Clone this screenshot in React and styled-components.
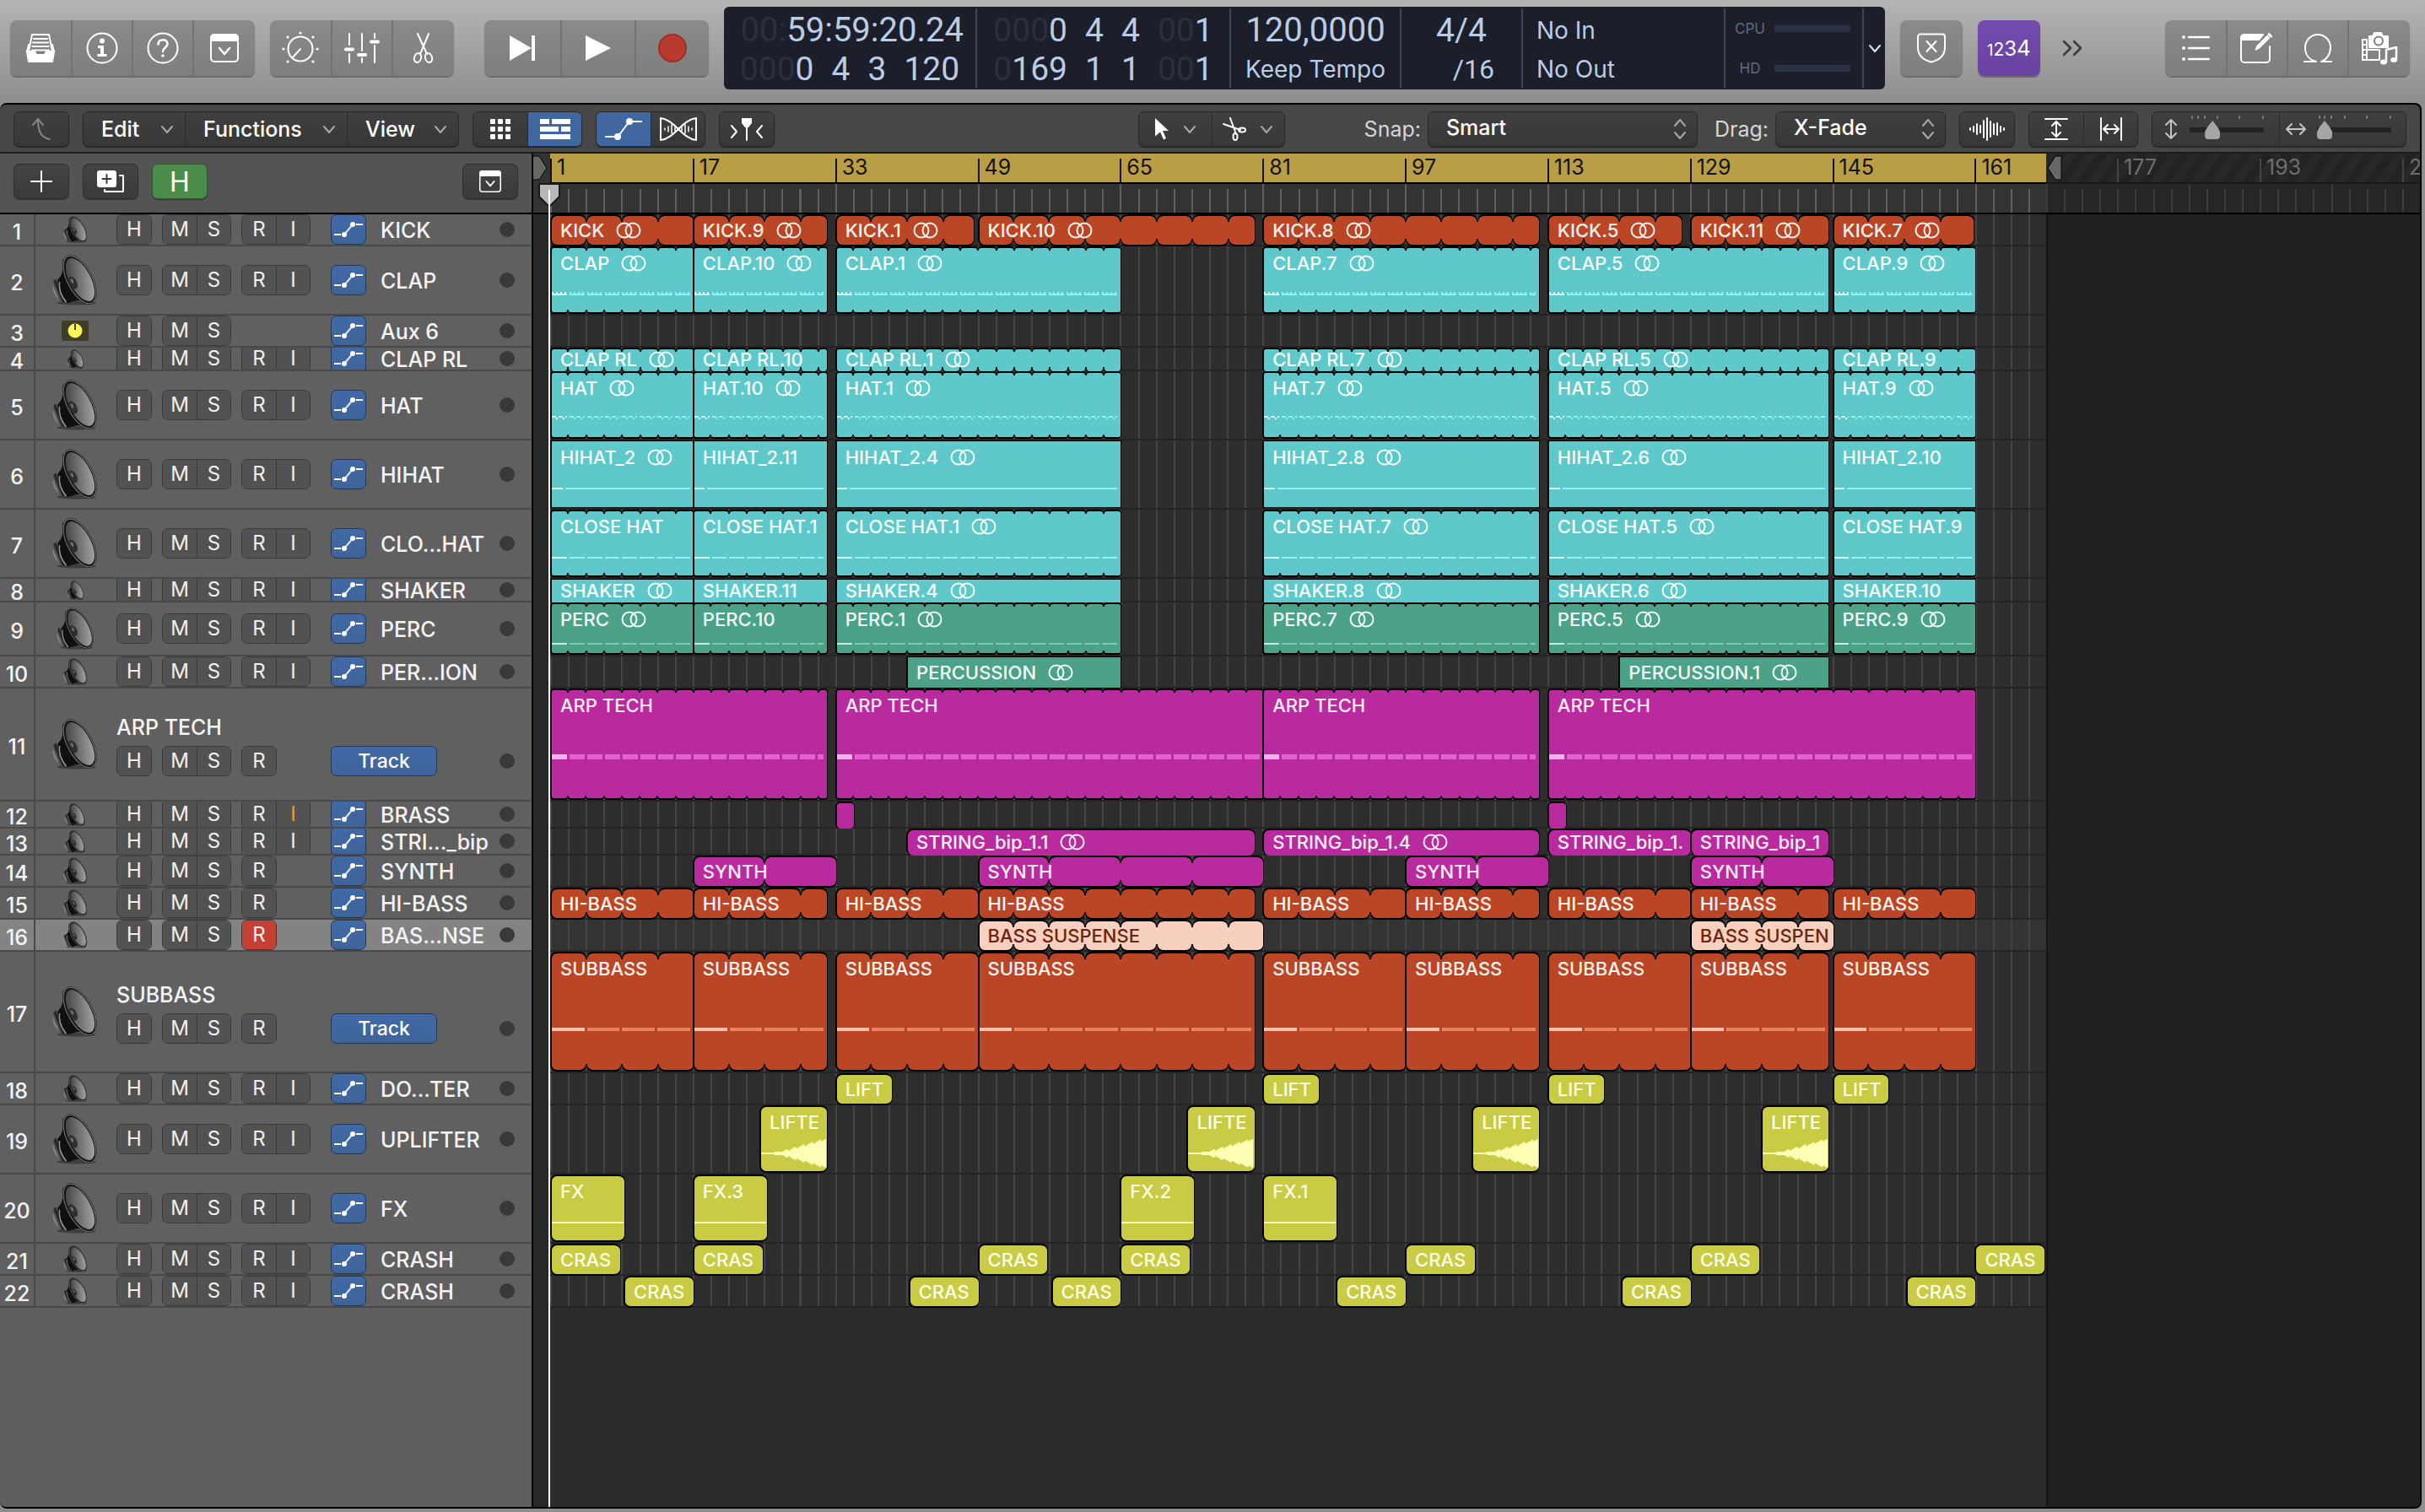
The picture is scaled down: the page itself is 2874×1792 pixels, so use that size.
import React, { Fragment } from 'react';
import styled, { createGlobalStyle, css } from 'styled-components';

const GlobalStyle = createGlobalStyle`
  * {
    box-sizing: border-box;
  }

  body {
    margin: 0;
    background: #8e8e8e;
    color: #f4f4f4;
    font-family: Inter, "Liberation Sans", sans-serif;
    font-size: 25px;
  }

  button, select {
    font: inherit;
    color: inherit;
  }

  svg {
    display: block;
    flex: none;
  }
`;

/* ---------- data ---------- */

const COLORS = {
  orange: { fill: '#ba4625', note: '#e8825f', first: '#f6c0ad', text: '#fff2ee' },
  cyan: { fill: '#5ec8ca', note: '#8df4f6', first: '#d2fdfd', text: '#f4ffff' },
  green: { fill: '#4ca189', note: '#76cdb4', first: '#c4eedf', text: '#f0fffa' },
  magenta: { fill: '#b92a9f', note: '#e362d0', first: '#f4b4ea', text: '#ffeefc' },
  yellow: { fill: '#c9cb44', note: '#feffb4', first: '#feffb4', text: '#fdffe4' },
  peach: { fill: '#f8d0c0', note: '#f8d0c0', first: '#f8d0c0', text: '#6b2410' },
};

// [label, first bar, last bar, linked]
const drums = (name, a, b, c, d, e, f, plain = []) => (
  [
    [name + a, 1, 17],
    [name + b, 17, 32],
    [name + c, 33, 65],
    [name + d, 81, 112],
    [name + e, 113, 144.5],
    [name + f, 145, 161],
  ].map((r, i) => [...r, !plain.includes(i)])
);

const bass = (name) => [
  [name, 1, 17], [name, 17, 32], [name, 33, 49], [name, 49, 80], [name, 81, 97],
  [name, 97, 112], [name, 113, 129], [name, 129, 144.5], [name, 145, 161],
];

const TRACKS = [
  {
    name: 'KICK', height: 38, color: 'orange', loop: 4, radius: 8, buttons: 'RI',
    regions: [
      ['KICK', 1, 17, true], ['KICK.9', 17, 32, true], ['KICK.1', 33, 48.5, true], ['KICK.10', 49, 80, true],
      ['KICK.8', 81, 112, true], ['KICK.5', 113, 128, true], ['KICK.11', 129, 144.5, true], ['KICK.7', 145, 160.75, true],
    ],
  },
  { name: 'CLAP', height: 82, color: 'cyan', loop: 2, radius: 4, buttons: 'RI', notes: 'comb', notesAt: 54, regions: drums('CLAP', '', '.10', '.1', '.7', '.5', '.9') },
  { name: 'Aux 6', height: 38, buttons: '', aux: true, regions: [] },
  { name: 'CLAP RL', height: 28, color: 'cyan', loop: 2, radius: 4, buttons: 'RI', regions: drums('CLAP RL', '', '.10', '.1', '.7', '.5', '.9', [1, 5]) },
  { name: 'HAT', height: 82, color: 'cyan', loop: 2, radius: 4, buttons: 'RI', notes: 'steps', notesAt: 53, regions: drums('HAT', '', '.10', '.1', '.7', '.5', '.9') },
  { name: 'HIHAT', height: 82, color: 'cyan', radius: 0, buttons: 'RI', notes: 'line', notesAt: 56, regions: drums('HIHAT_2', '', '.11', '.4', '.8', '.6', '.10', [1, 5]) },
  { name: 'CLO...HAT', height: 82, color: 'cyan', loop: 2, radius: 4, buttons: 'RI', notes: 'line', notesAt: 56, regions: drums('CLOSE HAT', '', '.1', '.1', '.7', '.5', '.9', [0, 1, 5]) },
  { name: 'SHAKER', height: 28, color: 'cyan', radius: 0, buttons: 'RI', regions: drums('SHAKER', '', '.11', '.4', '.8', '.6', '.10', [1, 5]) },
  { name: 'PERC', height: 64, color: 'green', loop: 2, radius: 4, buttons: 'RI', notes: 'line', notesAt: 48, regions: drums('PERC', '', '.10', '.1', '.7', '.5', '.9', [1]) },
  { name: 'PER...ION', height: 38, color: 'green', radius: 0, buttons: 'RI', regions: [['PERCUSSION', 41, 65, true], ['PERCUSSION.1', 121, 144.5, true]] },
  {
    name: 'ARP TECH', height: 134, color: 'magenta', loop: 2, radius: 4, buttons: 'R', tall: true, notes: 'block', notesAt: 78,
    regions: [['ARP TECH', 1, 32], ['ARP TECH', 33, 81], ['ARP TECH', 81, 112], ['ARP TECH', 113, 161]],
  },
  { name: 'BRASS', height: 32, color: 'magenta', radius: 5, buttons: 'RI', monitor: true, regions: [['', 33, 35], ['', 113, 115]] },
  {
    name: 'STRI..._bip', height: 32, color: 'magenta', radius: 8, buttons: 'RI',
    regions: [['STRING_bip_1.1', 41, 80, true], ['STRING_bip_1.4', 81, 112, true], ['STRING_bip_1.', 113, 129], ['STRING_bip_1', 129, 144.5]],
  },
  { name: 'SYNTH', height: 38, color: 'magenta', loop: 8, radius: 8, buttons: 'R', regions: [['SYNTH', 17, 33], ['SYNTH', 49, 81], ['SYNTH', 97, 113], ['SYNTH', 129, 145]] },
  { name: 'HI-BASS', height: 38, color: 'orange', loop: 4, radius: 8, buttons: 'R', regions: bass('HI-BASS') },
  { name: 'BAS...NSE', height: 38, color: 'peach', loop: 4, radius: 8, buttons: 'R', selected: true, regions: [['BASS SUSPENSE', 49, 81], ['BASS SUSPEN', 129, 145]] },
  { name: 'SUBBASS', height: 144, color: 'orange', loop: 4, radius: 8, buttons: 'R', tall: true, notes: 'bar', notesAt: 90, regions: bass('SUBBASS') },
  { name: 'DO...TER', height: 38, color: 'yellow', radius: 8, buttons: 'RI', regions: [['LIFT', 33, 39.25], ['LIFT', 81, 87.25], ['LIFT', 113, 119.25], ['LIFT', 145, 151.25]] },
  { name: 'UPLIFTER', height: 82, color: 'yellow', radius: 8, buttons: 'RI', notes: 'wave', notesAt: 40, regions: [['LIFTE', 24.5, 32], ['LIFTE', 72.5, 80], ['LIFTE', 104.5, 112], ['LIFTE', 137, 144.5]] },
  { name: 'FX', height: 82, color: 'yellow', radius: 8, buttons: 'RI', notes: 'line', notesAt: 56, regions: [['FX', 1, 9.25], ['FX.3', 17, 25.25], ['FX.2', 65, 73.25], ['FX.1', 81, 89.25]] },
  {
    name: 'CRASH', height: 38, color: 'yellow', radius: 8, buttons: 'RI',
    regions: [1, 17, 49, 65, 97, 129, 161].map((bar) => ['CRAS', bar, bar + 7.75]),
  },
  {
    name: 'CRASH', height: 38, color: 'yellow', radius: 8, buttons: 'RI',
    regions: [9.25, 41.25, 57.25, 89.25, 121.25, 153.25].map((bar) => ['CRAS', bar, bar + 7.75]),
  },
];

const ICON_HEIGHTS = { 28: 23, 32: 27, 38: 32, 64: 50 };

/* ---------- icons ---------- */

const Svg = ({ w, h, children, ...rest }) => (
  <svg
    width={w}
    height={h}
    viewBox={`0 0 ${w} ${h}`}
    fill="none"
    stroke="currentColor"
    strokeWidth="2"
    strokeLinecap="round"
    strokeLinejoin="round"
    aria-hidden="true"
    {...rest}
  >
    {children}
  </svg>
);

const LibraryIcon = () => (
  <Svg w={34} h={34}>
    <path d="M7 1h20l4 20v-1M7 1L3 21" />
    <path d="M9 6h16M8 10.500h18M7.500 15h19M7 19.500h20" />
    <path d="M1 21l2-8M33 21l-2-8" />
    <path d="M1 21h9l2 4h10l2-4h9l-2 12H3z" fill="currentColor" />
  </Svg>
);

const InfoIcon = () => (
  <Svg w={38} h={38}>
    <circle cx="19" cy="19" r="17.500" />
    <circle cx="19" cy="10.500" r="3" fill="currentColor" stroke="none" />
    <path d="M14 16h7v10h3.500v3h-11v-3H17v-7h-3z" fill="currentColor" stroke="none" />
  </Svg>
);

const HelpIcon = () => (
  <Svg w={38} h={38}>
    <circle cx="19" cy="19" r="17.500" />
    <path d="M13.500 14.500c0-7 11-7 11-.5 0 4.500-5.500 4.500-5.500 9" strokeWidth="2.500" />
    <circle cx="19" cy="28" r="1.800" fill="currentColor" stroke="none" />
  </Svg>
);

const PanelIcon = ({ w = 34, h = 34 }) => (
  <svg width={w} height={h} viewBox="0 0 34 34" fill="none" stroke="currentColor" strokeWidth="2" aria-hidden="true">
    <rect x="1" y="1" width="32" height="32" rx="4" />
    <path d="M1 8V5a4 4 0 0 1 4-4h24a4 4 0 0 1 4 4v3z" fill="currentColor" />
    <path d="M11 17l6 7 6-7" strokeWidth="2.500" strokeLinecap="round" strokeLinejoin="round" />
  </svg>
);

const KnobIcon = () => (
  <Svg w={44} h={40}>
    <circle cx="22" cy="21" r="14.500" />
    <path d="M22 21l-9 10" />
    {[[22, 2], [7, 7], [37, 7], [2, 21], [42, 21], [7, 36], [37, 36]].map(([x, y]) => (
      <circle key={`${x}-${y}`} cx={x} cy={y} r="1.600" fill="currentColor" stroke="none" />
    ))}
  </Svg>
);

const MixerIcon = () => (
  <Svg w={42} h={36}>
    <path d="M6 1v13M6 25v10M21 1v20M21 30v5M36 1v5M36 15v20" />
    <path d="M2 19.500h8M17 26h8M32 10.500h8" strokeWidth="4" />
  </Svg>
);

const ScissorsIcon = () => (
  <Svg w={28} h={36}>
    <path d="M7 1l11 24M20 1L10 25" />
    <ellipse cx="7" cy="29.500" rx="4" ry="5.500" transform="rotate(18 7 29.500)" />
    <ellipse cx="20" cy="29.500" rx="4" ry="5.500" transform="rotate(-18 20 29.500)" />
  </Svg>
);

const SkipIcon = () => (
  <Svg w={30} h={30}>
    <path d="M0 0l26 15L0 30zM26 0h4v30h-4z" fill="currentColor" stroke="none" />
  </Svg>
);

const PlayIcon = () => (
  <Svg w={30} h={30}>
    <path d="M0 0l30 15L0 30z" fill="currentColor" stroke="none" />
  </Svg>
);

const RecordIcon = () => (
  <Svg w={34} h={34}>
    <circle cx="17" cy="17" r="16" fill="#b93b2f" stroke="#9c2f26" />
  </Svg>
);

const ShieldIcon = () => (
  <Svg w={36} h={36}>
    <path d="M5 1.500h26a3 3 0 0 1 3 3V17c0 9-6 15-16 17.500C8 32 2 26 2 17V4.500a3 3 0 0 1 3-3z" />
    <path d="M12.500 10l11 12M23.500 10l-11 12" />
  </Svg>
);

const MoreIcon = () => (
  <Svg w={24} h={20} strokeWidth="2.500">
    <path d="M2 2l8 8-8 8M14 2l8 8-8 8" />
  </Svg>
);

const ListIcon = () => (
  <Svg w={34} h={30}>
    <path d="M9 2h24M9 15h24M9 28h24" strokeWidth="2.500" />
    {[2, 15, 28].map((y) => <circle key={y} cx="3" cy={y} r="2" fill="currentColor" stroke="none" />)}
  </Svg>
);

const NotepadIcon = () => (
  <Svg w={40} h={38}>
    <path d="M35 17v15a4 4 0 0 1-4 4H5a4 4 0 0 1-4-4V7a4 4 0 0 1 4-4h20" />
    <path d="M1 9V7a4 4 0 0 1 4-4h22l-5 6z" fill="currentColor" />
    <path d="M18 21l2-5L32 4l3 3-12 12z" fill="currentColor" strokeWidth="1" />
    <path d="M34 2.500l2.500 2.500" strokeWidth="3" />
  </Svg>
);

const LoopIcon = () => (
  <Svg w={36} h={36}>
    <path d="M2 34h14C8 32 3 26 3 17.500 3 9 9.500 2 18 2s15 7 15 15.500C33 25 28 32 22 34h12" />
  </Svg>
);

const MediaIcon = () => (
  <Svg w={44} h={40}>
    <path d="M10 6h4l2-4h8l2 4h6v13H10z" fill="currentColor" />
    <circle cx="21" cy="11.500" r="5" stroke="#808080" />
    <path d="M2 10v24M7 10v24M2 10h5M2 16h5M2 22h5M2 28h5M2 34h20V22H7" />
    <path d="M30 36V22l12-3v14" strokeWidth="2.500" />
    <ellipse cx="27" cy="36.500" rx="4" ry="3" fill="currentColor" stroke="none" />
    <ellipse cx="39" cy="34" rx="4" ry="3" fill="currentColor" stroke="none" />
  </Svg>
);

const Chevron = ({ color = '#a8a8a8' }) => (
  <Svg w={16} h={11} stroke={color}>
    <path d="M2 2l6 7 6-7" />
  </Svg>
);

const UpIcon = () => (
  <Svg w={24} h={28} stroke="#858585">
    <path d="M2 9l6-7 6 7M8 2c0 14 3 22 14 24" />
  </Svg>
);

const GridIcon = () => (
  <Svg w={24} h={24}>
    {[0, 9, 18].map((x) => [0, 9, 18].map((y) => (
      <rect key={`${x}${y}`} x={x} y={y} width="6" height="6" rx="1" fill="currentColor" stroke="none" />
    )))}
  </Svg>
);

const BricksIcon = () => (
  <Svg w={36} h={24}>
    <path d="M0 0h11v6H0zM14 0h22v6H14zM0 9h22v6H0zM25 9h11v6H25zM0 18h36v6H0z" fill="currentColor" stroke="none" />
  </Svg>
);

const AutomationIcon = () => (
  <Svg w={44} h={26}>
    <path d="M1 22h9M33 4h10M16 21L28 5" />
    <circle cx="15" cy="22" r="4" fill="currentColor" stroke="none" />
    <circle cx="29" cy="4" r="4" fill="currentColor" stroke="none" />
  </Svg>
);

const FlexIcon = () => (
  <Svg w={44} h={28}>
    <path d="M1 1v26c17-2 25-24 42-26v26C26 25 18 3 1 1z" />
    <path d="M6 13v2M10 11v6M14 9v10M18 12v4M26 12v4M30 9v10M34 11v6M38 13v2" strokeWidth="1.500" />
  </Svg>
);

const CatchIcon = () => (
  <Svg w={40} h={28}>
    <path d="M2 10l6 7-6 7M38 10l-6 7 6 7M20 8v19" />
    <path d="M14 1h12v6l-4 5h-4l-4-5z" fill="currentColor" stroke="none" />
  </Svg>
);

const PointerIcon = () => (
  <Svg w={18} h={26}>
    <path d="M1 0l16 15h-7l4 9-3 1.500-4-9-6 5z" fill="currentColor" stroke="none" />
  </Svg>
);

const CutIcon = () => (
  <Svg w={28} h={28}>
    <path d="M9 1l7 19M1 8l20 7" />
    <ellipse cx="15" cy="23" rx="2.500" ry="4" />
    <ellipse cx="23" cy="15" rx="4" ry="2.500" />
  </Svg>
);

const UpDownIcon = () => (
  <Svg w={16} h={26} stroke="#a8a8a8">
    <path d="M2 9l6-7 6 7M2 17l6 7 6-7" />
  </Svg>
);

const WaveIcon = () => (
  <Svg w={44} h={28}>
    <path d="M2 13v2M6 11v6M10 8v12M14 10v8M18 4v20M22 1v26M26 5v18M30 8v12M34 7v14M38 11v6M42 13v2" />
  </Svg>
);

const FitHeightIcon = () => (
  <Svg w={28} h={28}>
    <path d="M1 2h26M1 26h26M14 6v16M9 10l5-5 5 5M9 18l5 5 5-5" />
  </Svg>
);

const FitWidthIcon = () => (
  <Svg w={28} h={28}>
    <path d="M2 1v26M26 1v26M6 14h16M10 9l-5 5 5 5M18 9l5 5-5 5" />
  </Svg>
);

const ArrowVIcon = () => (
  <Svg w={16} h={26} stroke="#c4c4c4">
    <path d="M8 2v22M2 8l6-6 6 6M2 18l6 6 6-6" />
  </Svg>
);

const ArrowHIcon = () => (
  <Svg w={26} h={16} stroke="#c4c4c4">
    <path d="M2 8h22M8 2L2 8l6 6M18 2l6 6-6 6" />
  </Svg>
);

const PlusIcon = () => (
  <Svg w={26} h={26}>
    <path d="M13 1v24M1 13h24" />
  </Svg>
);

const DuplicateIcon = () => (
  <Svg w={32} h={26}>
    <rect x="0" y="0" width="23" height="20" rx="3" fill="currentColor" stroke="none" />
    <path d="M11.500 5v10M6.500 10h10" stroke="#3a3a3a" />
    <path d="M27 6h4v19H9v-2" />
  </Svg>
);

const LinkIcon = () => (
  <Svg w={30} h={20}>
    <circle cx="10" cy="10" r="8.500" />
    <circle cx="20" cy="10" r="8.500" />
  </Svg>
);

const TrackAutomationIcon = () => (
  <Svg w={36} h={20}>
    <path d="M1 16h8M27 4h8" strokeLinecap="butt" />
    <path d="M13 16L23 4" stroke="#dbe4f2" />
    <circle cx="13" cy="16" r="3" fill="currentColor" stroke="none" />
    <circle cx="23" cy="4" r="3" fill="currentColor" stroke="none" />
  </Svg>
);

const SpeakerIcon = ({ height }) => (
  <svg width={Math.round(height * 0.9)} height={height} viewBox="0 0 53 60" aria-hidden="true">
    <defs>
      <linearGradient id="cone" x1="0" y1="0" x2="1" y2="1">
        <stop offset="0" stopColor="#333" />
        <stop offset="0.45" stopColor="#6e6e6e" />
        <stop offset="1" stopColor="#b4b4b4" />
      </linearGradient>
      <linearGradient id="magnet" x1="0" y1="0" x2="1" y2="0">
        <stop offset="0" stopColor="#9a9a9a" />
        <stop offset="0.35" stopColor="#1c1c1c" />
        <stop offset="0.6" stopColor="#777" />
        <stop offset="1" stopColor="#0a0a0a" />
      </linearGradient>
    </defs>
    <ellipse cx="28" cy="57" rx="23" ry="2.500" fill="#000" opacity="0.35" />
    <ellipse cx="10" cy="42" rx="9" ry="15" transform="rotate(-22 10 42)" fill="url(#magnet)" />
    <path d="M6 29c7-6 6-14 6-24l32 50c-12-3-18 0-26 2-6-1-13-18-12-28z" fill="#101010" />
    <path d="M8 32c-1 8 2 17 8 24" stroke="#999" strokeWidth="1.500" fill="none" />
    <ellipse cx="32" cy="29.500" rx="15.500" ry="32" transform="rotate(-28 32 29.500)" fill="#161616" />
    <ellipse cx="32" cy="29.500" rx="14.500" ry="31" transform="rotate(-28 32 29.500)" fill="none" stroke="#7c7c7c" />
    <ellipse cx="32.500" cy="29.500" rx="12.500" ry="28" transform="rotate(-28 32.500 29.500)" fill="url(#cone)" />
    <ellipse cx="24" cy="33" rx="4.500" ry="8" transform="rotate(-28 24 33)" fill="#2e2e2e" />
    <ellipse cx="23" cy="31" rx="1.500" ry="3" transform="rotate(-28 23 31)" fill="#6f6f6f" />
  </svg>
);

const AuxIcon = () => (
  <svg width="32" height="24" viewBox="0 0 32 24" aria-hidden="true">
    <rect width="32" height="24" rx="2" fill="#3f3d26" />
    <circle cx="16" cy="12" r="8.500" fill="#fdf45c" />
    <path d="M16 4v7" stroke="#4a4720" strokeWidth="2" />
  </svg>
);

const RiserWave = () => {
  const points = [];
  for (let x = 16; x < 78; x += 2) {
    const jitter = (x * 7) % 5;
    points.push([x, Math.max(2, ((x - 12) / 64) * 18 - jitter * 0.600)]);
  }
  const top = points.map(([x, a]) => `${x},${17 - a} ${x + 2},${17 - a}`).join(' ');
  const bottom = points.slice().reverse().map(([x, a]) => `${x + 2},${17 + a} ${x},${17 + a}`).join(' ');
  return (
    <svg width="100%" height="34" viewBox="0 0 78 34" preserveAspectRatio="none" aria-hidden="true">
      <polygon points={`0,16 16,16 ${top} ${bottom} 16,18 0,18`} fill="#feffb4" />
    </svg>
  );
};

const PlayheadIcon = () => (
  <svg width="26" height="28" viewBox="0 0 26 28" aria-hidden="true">
    <path d="M1 1h24v15L14 27h-2L1 16z" fill="#b8b8b8" stroke="#1a1a1a" strokeWidth="2" />
    <path d="M13 8v20" stroke="#fff" strokeWidth="2" />
  </svg>
);

/* ---------- title bar ---------- */

const Page = styled.div`
  display: flex;
  flex-direction: column;
  min-height: 100vh;
  padding-bottom: 4px;
`;

const TitleBar = styled.header`
  display: flex;
  align-items: center;
  gap: 18px;
  padding: 8px 18px 16px 12px;
  background: linear-gradient(#b4b4b4, #8e8e8e);
`;

const BarGroup = styled.div`
  display: flex;
  height: 66px;
  margin-left: ${({ $before }) => $before || 0}px;
  border-radius: 8px;
  background: linear-gradient(#8a8a8a, #7e7e7e);
  box-shadow: 0 2px 1px #6a6a6a;
`;

const BarButton = styled.button`
  display: flex;
  align-items: center;
  justify-content: center;
  width: ${({ $width }) => $width || 72}px;
  padding: 0;
  border: 0;
  background: none;
  color: #fff;

  & + & {
    border-left: 2px solid #737373;
  }
`;

const CountInButton = styled(BarButton)`
  height: 66px;
  align-items: baseline;
  border-radius: 8px;
  background: linear-gradient(#754bb0, #6942a0);
  box-shadow: 0 2px 1px #6a6a6a;
  line-height: 66px;
`;

const Digit = styled.span`
  font-size: ${({ $size }) => $size}px;
`;

const MoreButton = styled.button`
  display: flex;
  align-items: center;
  width: 112px;
  height: 66px;
  padding: 0 8px;
  border: 0;
  background: none;
  color: #3c3c3c;
`;

const Lcd = styled.div`
  display: grid;
  grid-template-columns: 298fr 301fr 202fr 144fr 240fr 164fr 27fr;
  flex: 1;
  min-width: 0;
  height: 98px;
  padding: 2px 0;
  border-radius: 6px;
  background: #1c1e2a;
  color: #b9cde6;
`;

const LcdCell = styled.div`
  padding: 3px ${({ $pad }) => $pad || 14}px 0;
  overflow: hidden;
  white-space: nowrap;

  & + & {
    border-left: 2px solid #3b465c;
  }
`;

const LcdLine = styled.div`
  display: flex;
  gap: 21px;
  align-items: baseline;
  justify-content: ${({ $justify }) => $justify || 'flex-start'};
  height: 46px;
  font-family: Roboto, "Liberation Sans", sans-serif;
  font-size: ${({ $size }) => $size || 39}px;
  line-height: 46px;
`;

const LcdText = styled.span`
  font-family: Inter, "Liberation Sans", sans-serif;
  font-size: 28px;
`;

const Division = styled(LcdText)`
  font-family: Roboto, "Liberation Sans", sans-serif;
  font-size: 32px;
`;

const Dim = styled.span`
  color: #2b2f3c;
`;

const Meters = styled(LcdCell)`
  display: flex;
  flex-direction: column;
  justify-content: space-around;
  padding: 0 12px;
`;

const Meter = styled.div`
  display: grid;
  grid-template-columns: 34px 90px;
  gap: 12px;
  align-items: center;
  justify-items: center;
  color: #5d6b82;
  font-size: 17px;

  &::after {
    content: "";
    width: 100%;
    height: 8px;
    background: #2c3346;
  }
`;

const LcdMenu = styled.button`
  display: flex;
  align-items: center;
  justify-content: center;
  padding: 0;
  border: 0;
  border-left: 2px solid #3b465c;
  background: none;
`;

/* ---------- toolbar ---------- */

const Window = styled.main`
  display: flex;
  flex: 1;
  flex-direction: column;
  margin-right: 4px;
  overflow: hidden;
  border: solid #000;
  border-width: 2px 2px 2px 0;
  border-radius: 8px;
  background: #474747;
`;

const Toolbar = styled.div`
  display: flex;
  align-items: center;
  gap: 16px;
  padding: 8px 16px 6px;
  border-bottom: 2px solid #1b1b1b;
`;

const ToolGroup = styled.div`
  display: flex;
  height: 42px;
  margin-left: ${({ $push }) => $push || 0};
  border: 1px solid #2a2a2a;
  border-radius: 7px;
  overflow: hidden;
  background: linear-gradient(#404040, #373737);
  box-shadow: 0 1px 1px #222;
`;

const ToolButton = styled.button`
  display: flex;
  align-items: center;
  justify-content: ${({ $spread }) => ($spread ? 'space-between' : 'center')};
  width: ${({ $width }) => $width || 64}px;
  padding: ${({ $spread }) => ($spread ? '0 13px 0 21px' : 0)};
  border: 0;
  background: ${({ $active }) => ($active ? '#4167a1' : 'none')};
  color: #fff;
  font-size: 25px;
  font-weight: 500;

  & + & {
    border-left: 1px solid #2a2a2a;
  }
`;

const PairButton = styled(ToolButton)`
  gap: 16px;
`;

const Field = styled.label`
  display: flex;
  align-items: center;
  gap: 8px;
  margin-left: ${({ $before }) => $before}px;
  color: #d6d6d6;
  font-size: 25px;
`;

const SelectBox = styled.span`
  display: flex;
  align-items: center;
  width: ${({ $width }) => $width}px;
  height: 42px;
  padding-right: 12px;
  border: 1px solid #2a2a2a;
  border-radius: 7px;
  background: linear-gradient(#404040, #373737);
  box-shadow: 0 1px 1px #222;
`;

const Select = styled.select`
  flex: 1;
  min-width: 0;
  height: 40px;
  padding: 0 0 5px 21px;
  border: 0;
  outline: 0;
  appearance: none;
  background: none;
  color: #fff;
  font-weight: 500;
`;

const Zoom = styled.label`
  display: flex;
  align-items: center;
  gap: ${({ $gap }) => $gap}px;
  width: 150px;
  padding-left: ${({ $pad }) => $pad}px;

  & + & {
    border-left: 1px solid #2a2a2a;
  }
`;

const ZoomScale = styled.span`
  display: flex;
  flex-direction: column;
  width: 88px;
  height: 40px;
  padding-top: 4px;
`;

const Range = styled.input`
  width: 88px;
  height: 24px;
  margin: 0;
  appearance: none;
  background: linear-gradient(#232323, #232323) center / 100% 6px no-repeat;

  &::-webkit-slider-thumb {
    appearance: none;
    width: 18px;
    height: 22px;
    background: #a6a6a6;
    border-radius: 0 0 4px 4px;
    clip-path: polygon(50% 0, 85% 36%, 100% 60%, 100% 100%, 0 100%, 0 60%, 15% 36%);
  }
`;

/* ---------- tracks ---------- */

const Workspace = styled.div`
  display: flex;
  flex: 1;
  background: #2b2b2b;
`;

const TrackPanel = styled.section`
  flex: none;
  width: 632px;
  border-right: 2px solid #000;
  background: #5f5f5f;
`;

const PanelHeader = styled.div`
  display: flex;
  gap: 16px;
  height: 72px;
  padding: 12px 16px;
  border-bottom: 2px solid #000;
  background: #545454;
`;

const HeaderButton = styled.button`
  display: flex;
  align-items: center;
  justify-content: center;
  width: 66px;
  height: 42px;
  margin-left: ${({ $push }) => $push || 0};
  padding: 0;
  border: 1px solid ${({ $on }) => ($on ? '#2e5c2d' : '#2f2f2f')};
  border-radius: 7px;
  background: ${({ $on }) => ($on ? '#4c8c4a' : 'linear-gradient(#444, #3a3a3a)')};
  box-shadow: 0 1px 1px #333;
  color: #fff;
  font-size: 32px;
`;

const Track = styled.div`
  display: flex;
  align-items: stretch;
  height: ${({ $height }) => $height}px;
  overflow: hidden;
  border-bottom: 2px solid #494949;
  background: ${({ $selected }) => ($selected ? '#838383' : '#606060')};
`;

const TrackNumber = styled.div`
  display: flex;
  align-items: center;
  justify-content: center;
  width: 42px;
  padding-top: 6px;
  border-right: 2px solid #494949;
  font-weight: 500;
  line-height: 20px;
`;

const TrackIcon = styled.div`
  display: flex;
  align-items: center;
  justify-content: center;
  width: 94px;
  margin-right: 2px;
`;

const TrackBody = styled.div`
  display: flex;
  flex: 1;
  flex-direction: column;
  justify-content: center;
  gap: 4px;
  min-width: 0;
`;

const Controls = styled.div`
  display: flex;
  flex: none;
  align-items: center;
  gap: 12px;
  height: 36px;
  padding-right: 20px;
`;

const Slot = styled.div`
  display: flex;
  width: 82px;
`;

const Keys = styled.div`
  display: flex;
  height: 36px;
  overflow: hidden;
  border: 1px solid #393939;
  border-radius: 7px;
`;

const Key = styled.button`
  width: 40px;
  padding: 0;
  border: 0;
  background: ${({ $record }) => ($record ? '#c44033' : '#525252')};
  color: ${({ $monitor }) => ($monitor ? '#f09a35' : '#f0f0f0')};
  font-size: 24px;
  line-height: 24px;

  & + & {
    border-left: 1px solid #393939;
  }
`;

const AutomationButton = styled.button`
  display: flex;
  align-items: center;
  justify-content: center;
  flex: none;
  width: ${({ $wide }) => ($wide ? 126 : 42)}px;
  height: 36px;
  margin-left: 12px;
  padding: 0;
  border: 1px solid #24395a;
  border-radius: 7px;
  background: linear-gradient(#4169a6, #3f6499);
  color: #fff;
  font-size: 23px;
  font-weight: 500;
`;

const TrackName = styled.div`
  flex: 1;
  min-width: 0;
  padding-top: ${({ $inline }) => ($inline ? 2 : 0)}px;
  padding-left: ${({ $inline }) => ($inline ? 5 : 0)}px;
  white-space: nowrap;
  font-weight: 500;
  line-height: 24px;
`;

const Dot = styled.span`
  flex: none;
  width: 18px;
  height: 18px;
  margin-left: auto;
  border-radius: 50%;
  background: #393939;
`;

const TrackHeader = ({ track, number }) => {
  const { name, height, buttons, tall, aux, selected, monitor } = track;
  const title = <TrackName $inline={!tall}>{name}</TrackName>;

  return (
    <Track $height={height} $selected={selected}>
      <TrackNumber>{number}</TrackNumber>
      <TrackIcon>
        {aux ? <AuxIcon /> : <SpeakerIcon height={ICON_HEIGHTS[height] || 60} />}
      </TrackIcon>
      <TrackBody>
        {tall ? <Controls>{title}</Controls> : null}
        <Controls>
          <Keys><Key>H</Key></Keys>
          <Keys><Key>M</Key><Key>S</Key></Keys>
          <Slot>
            {buttons ? (
              <Keys>
                {buttons.split('').map((letter) => (
                  <Key
                    key={letter}
                    $record={selected && letter === 'R'}
                    $monitor={monitor && letter === 'I'}
                  >
                    {letter}
                  </Key>
                ))}
              </Keys>
            ) : null}
          </Slot>
          <AutomationButton $wide={tall} aria-label={tall ? undefined : 'Automation'}>
            {tall ? 'Track' : <TrackAutomationIcon />}
          </AutomationButton>
          {tall ? null : title}
          <Dot />
        </Controls>
      </TrackBody>
    </Track>
  );
};

/* ---------- arrangement ---------- */

const Arrange = styled.section`
  position: relative;
  display: flex;
  flex: 1;
  flex-direction: column;
  min-width: 0;
  padding-left: 20px;
  overflow: hidden;
  background: #282828;
`;

const RulerRow = styled.div`
  display: flex;
  flex: none;
  height: 72px;
  margin-left: -20px;
  padding-left: 20px;
  border-bottom: 2px solid #000;
  background: #333;
`;

const ticks = (count, color) => css`
  repeating-linear-gradient(
    to right,
    ${color} 0 2px,
    transparent 2px calc(100% / ${count})
  )
`;

const Cycle = styled.div`
  display: flex;
  flex-direction: column;
  flex: ${({ $past }) => ($past ? 1 : 4)} 1 0;
  min-width: 0;
  color: ${({ $past }) => ($past ? '#6e6e6e' : '#14120a')};
  background: ${({ $past }) => ($past ? '#262626' : '#333')};
`;

const CycleBar = styled.div`
  display: grid;
  grid-template-columns: repeat(${({ $bars }) => $bars}, minmax(0, 1fr));
  align-items: end;
  height: 36px;
  border-bottom: 2px solid ${({ $past }) => ($past ? '#1a1a1a' : '#000')};
  background: ${({ $past }) => ($past
    ? 'repeating-linear-gradient(125deg, #282828 0 10px, #222 10px 20px)'
    : '#b99e45')};
`;

const BarNumber = styled.span`
  grid-row: 1;
  grid-column: ${({ $col }) => $col} / span 1;
  height: 28px;
  padding-left: 6px;
  border-left: 2px solid ${({ $past }) => ($past ? '#444' : '#14120a')};
  white-space: nowrap;
  font-size: 25px;
  line-height: 20px;
`;

const TickStrip = styled.div`
  display: flex;
  flex: 1;
  flex-direction: column;
  background: ${({ $count, $color }) => ticks($count / 8, $color)};

  &::after {
    content: "";
    flex: 1;
    margin-top: 6px;
    background: ${({ $count, $color }) => ticks($count, $color)};
  }
`;

const EndMarker = styled.svg`
  position: absolute;
  top: 2px;
  left: ${({ $left }) => $left};
`;

const Lanes = styled.div`
  display: flex;
  flex: 1;
`;

const LaneColumn = styled.div`
  flex: 4 1 0;
  min-width: 0;
  background: #2c2c2c;
`;

const PastEnd = styled.div`
  flex: 1 1 0;
  box-shadow: inset 2px 0 #141414;
  background: #212121;
`;

const Lane = styled.div`
  display: grid;
  grid-template-columns: repeat(672, minmax(0, 1fr));
  height: ${({ $height }) => $height}px;
  overflow: hidden;
  background:
    linear-gradient(#242424, #242424) bottom / 100% 2px no-repeat,
    ${ticks(84, '#444')},
    ${({ $selected }) => ($selected ? '#343434' : '#2d2d2d')};
`;

const RegionBox = styled.div`
  position: relative;
  grid-row: 1;
  grid-column: ${({ $from }) => $from} / ${({ $to }) => $to};
  height: ${({ $height }) => ($height > 38 ? $height - 2 : $height)}px;
  margin-right: -2px;
  overflow: hidden;
  color: ${({ $color }) => $color};
`;

const LoopShapes = styled.div`
  position: absolute;
  inset: 0;
  display: flex;
  overflow: hidden;

  &::after {
    content: "";
    position: absolute;
    inset: ${({ $radius }) => $radius + 1}px 1px ${({ $radius }) => $radius + 1}px 2px;
    background: ${({ $fill }) => $fill};
  }
`;

const LoopShape = styled.span`
  flex: none;
  border: solid #000;
  border-width: 2px 1px ${({ $cut }) => ($cut ? 0 : 2)}px;
  border-radius: ${({ $radius }) => $radius}px;
  background: ${({ $fill }) => $fill};

  &:first-child {
    border-left-width: 2px;
  }
`;

const RegionLabel = styled.div`
  position: relative;
  display: flex;
  align-items: center;
  gap: 14px;
  height: ${({ $height }) => Math.min($height, 40)}px;
  padding-left: 12px;
  white-space: nowrap;
  font-size: 22px;
  font-weight: 500;
`;

const Notes = styled.div`
  position: relative;
  display: flex;
  margin: ${({ $top }) => $top}px 2px 0;
  overflow: hidden;
`;

const noteStyles = {
  line: css`
    height: 2px;
    background: currentColor;
  `,
  bar: css`
    height: 4px;
    background: currentColor;
  `,
  block: css`
    height: 6px;
    background: currentColor;
  `,
  comb: css`
    height: 4px;
    background:
      linear-gradient(currentColor, currentColor) bottom / 100% 2px no-repeat,
      repeating-linear-gradient(to right, currentColor 0 2px, transparent 2px 5px);
  `,
  steps: css`
    height: 4px;
    background:
      repeating-linear-gradient(to right, currentColor 0 5px, transparent 5px 8px) top / 100% 2px no-repeat,
      repeating-linear-gradient(to right, transparent 0 5px, currentColor 5px 7px, transparent 7px 8px) bottom / 100% 2px no-repeat;
  `,
};

const Note = styled.span`
  flex: none;
  padding-right: ${({ $solid }) => ($solid ? 0 : 3)}px;
  color: ${({ $color }) => $color};

  &::before {
    content: "";
    display: block;
    ${({ $kind }) => noteStyles[$kind]}
  }
`;

const loopWidths = (length, loop) => {
  const widths = [];
  for (let at = 0; at < length; at += loop) {
    widths.push((Math.min(loop, length - at) / length) * 100);
  }
  return widths;
};

const RegionNotes = ({ track, length }) => {
  const palette = COLORS[track.color];
  const top = track.notesAt - 40;

  if (track.notes === 'wave') {
    return <Notes $top={top}><RiserWave /></Notes>;
  }

  const first = Math.min(1.5, length);
  const widths = track.loop
    ? loopWidths(length, track.loop)
    : [(first / length) * 100, 100 - (first / length) * 100];

  return (
    <Notes $top={top}>
      {widths.map((width, i) => (
        <Note
          key={i}
          $kind={track.notes}
          $solid={track.color === 'yellow'}
          $color={i === 0 ? palette.first : palette.note}
          style={{ width: `${width}%` }}
        />
      ))}
    </Notes>
  );
};

const Region = ({ track, region }) => {
  const [label, start, end, linked] = region;
  const palette = COLORS[track.color];
  const length = end - start;

  return (
    <RegionBox
      $from={(start - 1) * 4 + 1}
      $to={(end - 1) * 4 + 1}
      $height={track.height}
      $color={palette.text}
    >
      <LoopShapes $fill={palette.fill} $radius={track.radius}>
        {loopWidths(length, track.loop || length).map((width, i) => (
          <LoopShape
            key={i}
            $fill={palette.fill}
            $radius={track.radius}
            $cut={track.height < 38}
            style={{ width: `${width}%` }}
          />
        ))}
      </LoopShapes>
      <RegionLabel $height={track.height}>
        {label ? <span>{label}</span> : null}
        {linked ? <LinkIcon /> : null}
      </RegionLabel>
      {track.notes ? <RegionNotes track={track} length={length} /> : null}
    </RegionBox>
  );
};

const Playhead = styled.div`
  position: absolute;
  top: 35px;
  bottom: 0;
  left: 6px;
  width: 26px;
  background: linear-gradient(#fff, #fff) 12px 26px / 2px 100% no-repeat;
`;

const Ruler = () => (
  <RulerRow>
    <Cycle>
      <CycleBar $bars={168}>
        {[1, 17, 33, 49, 65, 81, 97, 113, 129, 145, 161].map((bar) => (
          <BarNumber key={bar} $col={bar}>{bar}</BarNumber>
        ))}
      </CycleBar>
      <TickStrip $count={84} $color="#5e5e5e" />
    </Cycle>
    <Cycle $past>
      <CycleBar $bars={42} $past>
        {[177, 193, 209].map((bar) => (
          <BarNumber key={bar} $col={bar - 168} $past>{bar}</BarNumber>
        ))}
      </CycleBar>
      <TickStrip $count={21} $color="#3c3c3c" />
    </Cycle>
  </RulerRow>
);

const ZoomSlider = ({ label, icon, pad, gap, value, marks }) => (
  <Zoom $pad={pad} $gap={gap}>
    {icon}
    <ZoomScale>
      <svg width="88" height="5" aria-hidden="true">
        {marks.map((x) => <rect key={x} x={x} width="2" height="4" fill="#777" />)}
      </svg>
      <Range type="range" defaultValue={value} aria-label={label} />
    </ZoomScale>
  </Zoom>
);

const Display = () => (
  <Lcd>
    <LcdCell>
      <LcdLine $justify="flex-end" $size={40}><span><Dim>00:</Dim>59:59:20.24</span></LcdLine>
      <LcdLine $justify="center">
        <span><Dim>000</Dim>0</span>
        <span>4</span>
        <span>3</span>
        <span>120</span>
      </LcdLine>
    </LcdCell>
    <LcdCell>
      <LcdLine $justify="center">
        <span><Dim>000</Dim>0</span>
        <span>4</span>
        <span>4</span>
        <span><Dim>00</Dim>1</span>
      </LcdLine>
      <LcdLine $justify="center">
        <span><Dim>0</Dim>169</span>
        <span>1</span>
        <span>1</span>
        <span><Dim>00</Dim>1</span>
      </LcdLine>
    </LcdCell>
    <LcdCell>
      <LcdLine $justify="center" $size={40}>120,0000</LcdLine>
      <LcdLine $justify="center"><LcdText>Keep Tempo</LcdText></LcdLine>
    </LcdCell>
    <LcdCell $pad={32}>
      <LcdLine $justify="center">4/4</LcdLine>
      <LcdLine $justify="flex-end"><Division>/16</Division></LcdLine>
    </LcdCell>
    <LcdCell $pad={16}>
      <LcdLine><LcdText>No In</LcdText></LcdLine>
      <LcdLine><LcdText>No Out</LcdText></LcdLine>
    </LcdCell>
    <Meters>
      <Meter>CPU</Meter>
      <Meter>HD</Meter>
    </Meters>
    <LcdMenu aria-label="Display mode"><Chevron color="#dce6f4" /></LcdMenu>
  </Lcd>
);

const App = () => (
  <Fragment>
    <GlobalStyle />
    <Page>
      <TitleBar>
        <BarGroup>
          <BarButton aria-label="Library"><LibraryIcon /></BarButton>
          <BarButton aria-label="Inspector"><InfoIcon /></BarButton>
          <BarButton aria-label="Quick help"><HelpIcon /></BarButton>
          <BarButton aria-label="Toolbar" $width={74}><PanelIcon /></BarButton>
        </BarGroup>
        <BarGroup>
          <BarButton aria-label="Smart controls"><KnobIcon /></BarButton>
          <BarButton aria-label="Mixer"><MixerIcon /></BarButton>
          <BarButton aria-label="Editors" $width={74}><ScissorsIcon /></BarButton>
        </BarGroup>
        <BarGroup $before={18}>
          <BarButton aria-label="Go to end" $width={90}><SkipIcon /></BarButton>
          <BarButton aria-label="Play" $width={88}><PlayIcon /></BarButton>
          <BarButton aria-label="Record" $width={88}><RecordIcon /></BarButton>
        </BarGroup>
        <Display />
        <BarGroup>
          <BarButton aria-label="Replace" $width={74}><ShieldIcon /></BarButton>
        </BarGroup>
        <CountInButton aria-label="Count in" $width={74}>
          <Digit $size={18}>1</Digit>
          <Digit $size={21}>2</Digit>
          <Digit $size={24}>3</Digit>
          <Digit $size={26}>4</Digit>
        </CountInButton>
        <MoreButton aria-label="More"><MoreIcon /></MoreButton>
        <BarGroup>
          <BarButton aria-label="Lists"><ListIcon /></BarButton>
          <BarButton aria-label="Notes"><NotepadIcon /></BarButton>
          <BarButton aria-label="Loops"><LoopIcon /></BarButton>
          <BarButton aria-label="Browsers" $width={74}><MediaIcon /></BarButton>
        </BarGroup>
      </TitleBar>

      <Window>
        <Toolbar>
          <ToolGroup><ToolButton aria-label="Up"><UpIcon /></ToolButton></ToolGroup>
          <ToolGroup>
            <ToolButton $width={120} $spread>Edit<Chevron /></ToolButton>
            <ToolButton $width={192} $spread>Functions<Chevron /></ToolButton>
            <ToolButton $width={132} $spread>View<Chevron /></ToolButton>
          </ToolGroup>
          <ToolGroup>
            <ToolButton aria-label="Live loops"><GridIcon /></ToolButton>
            <ToolButton aria-label="Tracks" $active><BricksIcon /></ToolButton>
          </ToolGroup>
          <ToolGroup>
            <ToolButton aria-label="Automation" $active><AutomationIcon /></ToolButton>
            <ToolButton aria-label="Flex"><FlexIcon /></ToolButton>
          </ToolGroup>
          <ToolGroup><ToolButton aria-label="Catch playhead"><CatchIcon /></ToolButton></ToolGroup>
          <ToolGroup $push="auto">
            <PairButton aria-label="Pointer tool" $width={86}><PointerIcon /><Chevron /></PairButton>
            <PairButton aria-label="Scissors tool" $width={86}><CutIcon /><Chevron /></PairButton>
          </ToolGroup>
          <Field $before={78}>
            Snap:
            <SelectBox $width={320}>
              <Select defaultValue="Smart"><option>Smart</option><option>Bar</option></Select>
              <UpDownIcon />
            </SelectBox>
          </Field>
          <Field $before={4}>
            Drag:
            <SelectBox $width={202}>
              <Select defaultValue="X-Fade"><option>X-Fade</option><option>Overlap</option></Select>
              <UpDownIcon />
            </SelectBox>
          </Field>
          <ToolGroup><ToolButton aria-label="Waveform zoom"><WaveIcon /></ToolButton></ToolGroup>
          <ToolGroup>
            <ToolButton aria-label="Fit height"><FitHeightIcon /></ToolButton>
            <ToolButton aria-label="Fit width"><FitWidthIcon /></ToolButton>
          </ToolGroup>
          <ToolGroup>
            <ZoomSlider label="Vertical zoom" icon={<ArrowVIcon />} pad={14} gap={14} value={26} marks={[2, 9, 17, 32, 58, 86]} />
            <ZoomSlider label="Horizontal zoom" icon={<ArrowHIcon />} pad={6} gap={12} value={0} marks={[2, 8, 16, 32, 58, 86]} />
          </ToolGroup>
        </Toolbar>

        <Workspace>
          <TrackPanel>
            <PanelHeader>
              <HeaderButton aria-label="Add track"><PlusIcon /></HeaderButton>
              <HeaderButton aria-label="Duplicate track"><DuplicateIcon /></HeaderButton>
              <HeaderButton $on>H</HeaderButton>
              <HeaderButton aria-label="Track header options" $push="auto"><PanelIcon w={26} h={26} /></HeaderButton>
            </PanelHeader>
            {TRACKS.map((track, i) => (
              <TrackHeader key={i} track={track} number={i + 1} />
            ))}
          </TrackPanel>

          <Arrange>
            <Ruler />
            <EndMarker $left="-2px" width="20" height="30" aria-hidden="true">
              <path d="M1 1h8l9 14-9 14H1z" fill="#666" stroke="#000" />
            </EndMarker>
            <EndMarker $left="calc(20px + (100% - 20px) * 0.8)" width="20" height="30" aria-hidden="true">
              <path d="M18 1h-7L2 15l9 14h7z" fill="#666" stroke="#000" />
            </EndMarker>
            <Lanes>
              <LaneColumn>
                {TRACKS.map((track, i) => (
                  <Lane key={i} $height={track.height} $selected={track.selected}>
                    {track.regions.map((region) => (
                      <Region key={region[1]} track={track} region={region} />
                    ))}
                  </Lane>
                ))}
              </LaneColumn>
              <PastEnd />
            </Lanes>
            <Playhead><PlayheadIcon /></Playhead>
          </Arrange>
        </Workspace>
      </Window>
    </Page>
  </Fragment>
);

export default App;
